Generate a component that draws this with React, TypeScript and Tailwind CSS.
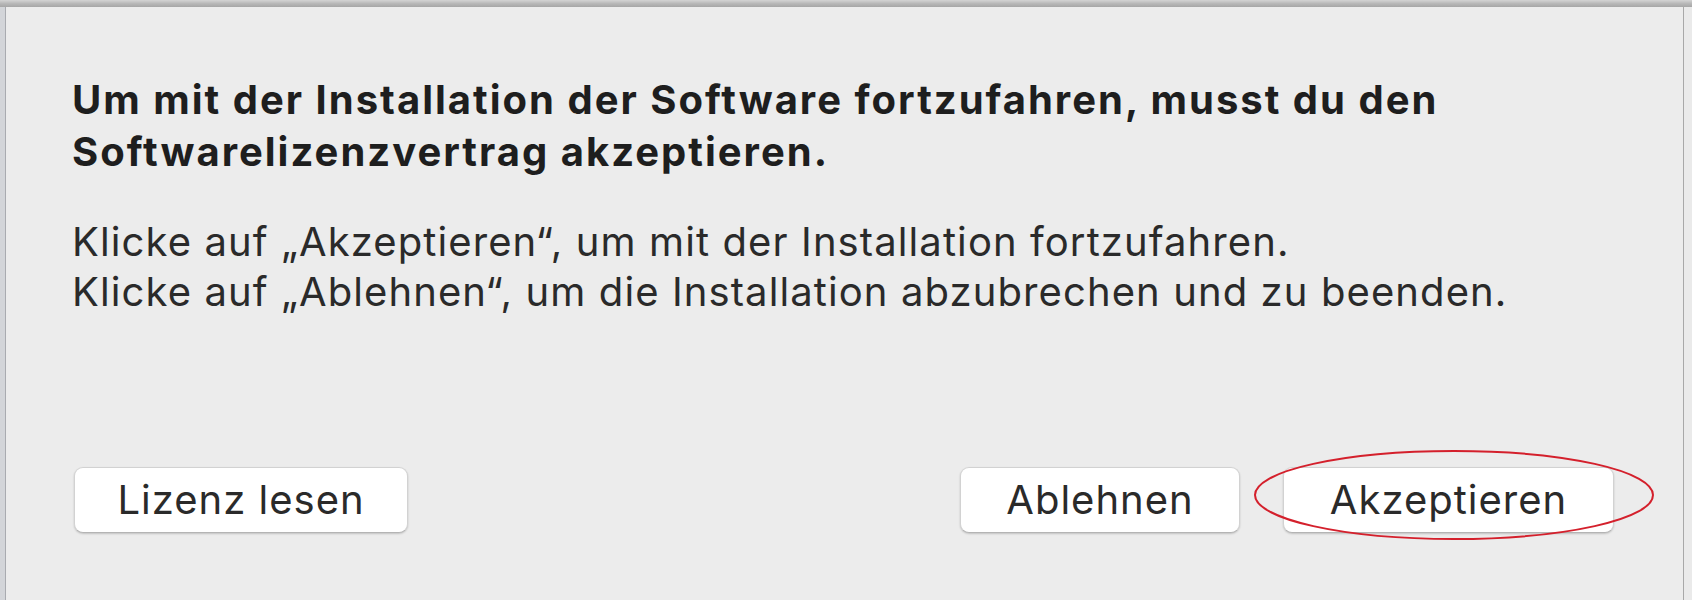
import React from "react";

function Btn({ label, w }: { label: string; w: string }) {
  return (
    <div
      className={`${w} h-[66px] flex items-center justify-center rounded-[9px] bg-white border border-[#d2d2d2] border-b-[#b4b4b4] shadow-[0_1px_2px_rgba(0,0,0,0.18)] text-[40px] tracking-[1px] text-[#2a2a2a] leading-none`}
    >
      {label}
    </div>
  );
}

export default function App() {
  return (
    <div
      className="w-[1692px] h-[600px] flex flex-col overflow-hidden bg-[#ececec]"
      style={{ fontFamily: "Inter, 'Noto Sans', sans-serif" }}
    >
      <div className="h-[7px] shrink-0 bg-gradient-to-b from-[#d4d4d4] via-[#b8b8b8] to-[#a6a6a6]" />
      <div className="flex flex-1 min-h-0">
        <div className="w-[6px] shrink-0 bg-[#d3d5d9] border-r border-[#a9abb0]" />
        <div className="relative flex-1 flex flex-col bg-[#ececec] pl-[66px] pr-[69px] pt-[67px] pb-[67px]">
          <div className="text-[40px] leading-[52px] font-bold tracking-[2px] text-[#1e1e1e] whitespace-nowrap">
            Um mit der Installation der Software fortzufahren, musst du den
            <br />
            Softwarelizenzvertrag akzeptieren.
          </div>
          <div className="mt-[39px] text-[40px] leading-[50px] tracking-[1.1px] text-[#2a2a2a] whitespace-nowrap">
            Klicke auf „Akzeptieren“, um mit der Installation fortzufahren.
            <br />
            Klicke auf „Ablehnen“, um die Installation abzubrechen und zu beenden.
          </div>
          <div className="mt-auto flex items-center justify-between pl-[2px]">
            <Btn label="Lizenz lesen" w="w-[334px]" />
            <div className="flex items-center gap-[43px]">
              <Btn label="Ablehnen" w="w-[280px]" />
              <Btn label="Akzeptieren" w="w-[331px]" />
            </div>
          </div>
          <svg
            className="absolute left-[1246px] top-[443px] pointer-events-none"
            width="404"
            height="94"
            viewBox="0 0 404 94"
          >
            <ellipse cx="202" cy="45" rx="199" ry="44" fill="none" stroke="#d4202c" strokeWidth="2" />
          </svg>
        </div>
        <div className="w-[9px] shrink-0 bg-[#eaeaea] border-l border-[#a8a8a8]" />
      </div>
    </div>
  );
}
